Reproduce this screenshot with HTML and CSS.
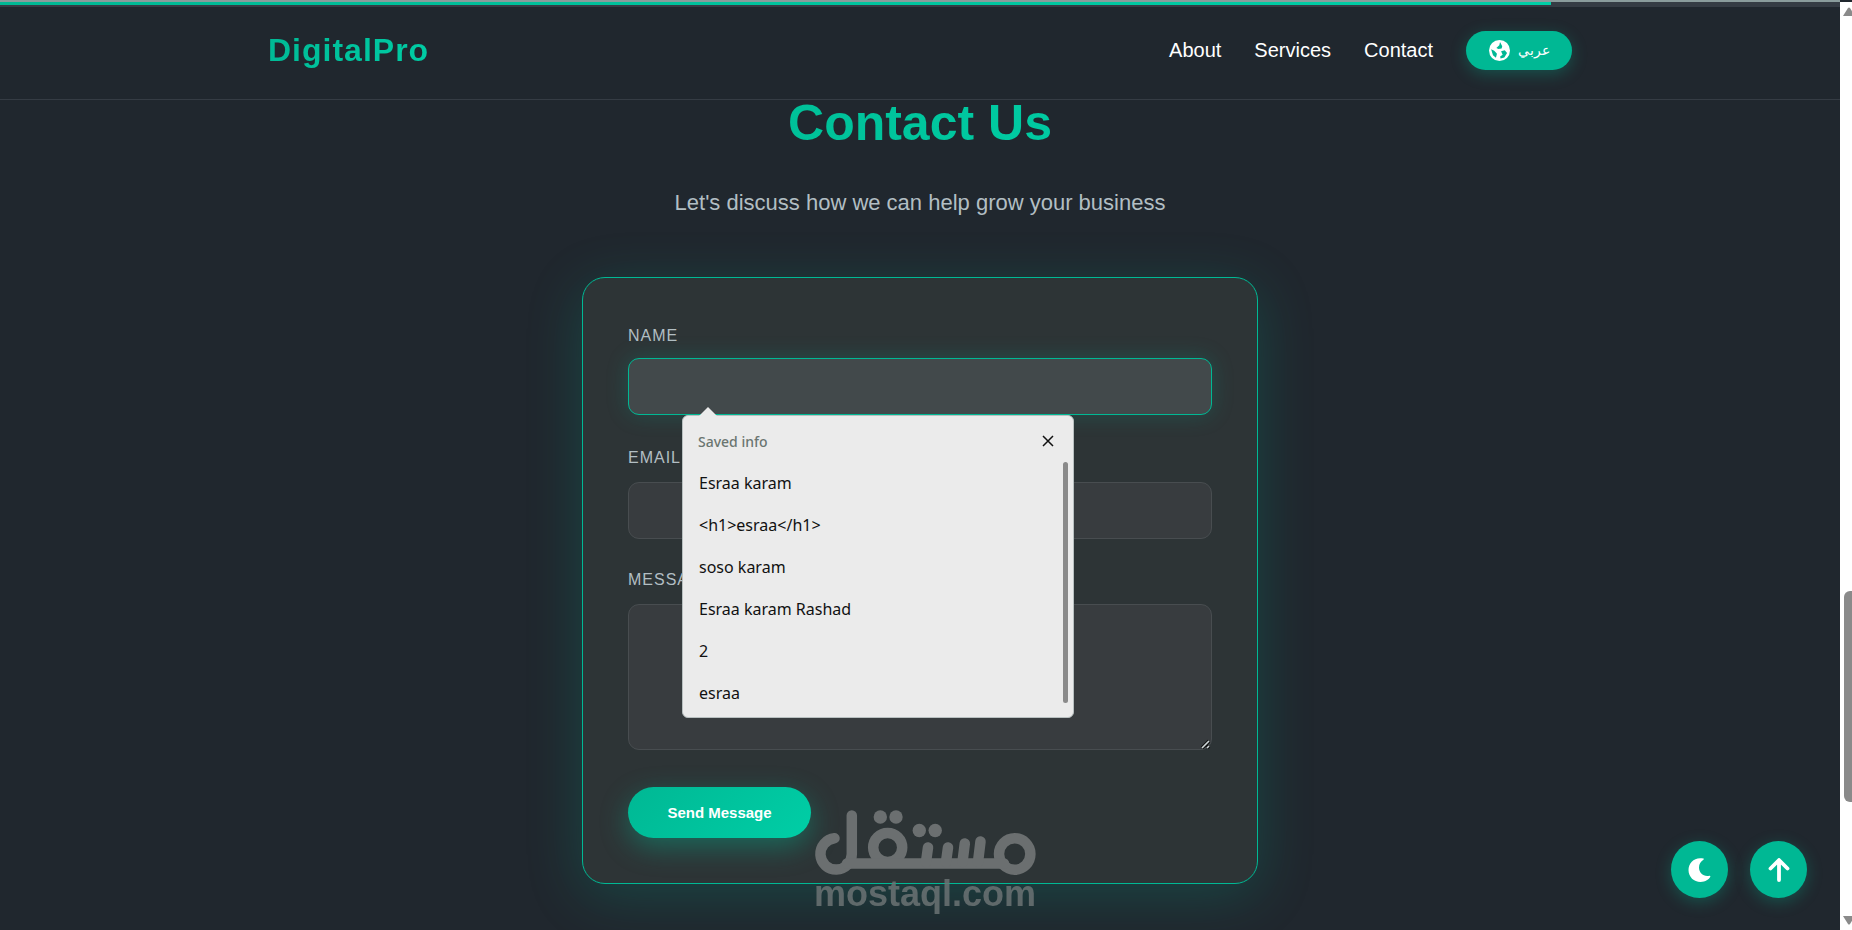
FILE: index.html
```html
<!DOCTYPE html>
<html lang="en">
<head>
<meta charset="utf-8">
<title>DigitalPro - Contact Us</title>
<link rel="stylesheet" href="styles.css">
</head>
<body>
<div class="page">
  <header class="header">
    <div class="progress"><div class="progress-fill"></div></div>
    <div class="header-inner">
      <a class="logo" href="#">DigitalPro</a>
      <nav class="nav">
        <a class="nav-link" href="#about">About</a>
        <a class="nav-link" href="#services">Services</a>
        <a class="nav-link" href="#contact">Contact</a>
        <button class="lang" type="button">
          <svg class="lang-icon" viewBox="0 0 20 20" aria-hidden="true">
            <circle cx="10" cy="10" r="10" fill="#fff"/>
            <path d="M10.500 1.800 L12.600 6 L12 8 L9 8.600 L7 7.600 L9.800 5 Z M2 8.800 L5 10.200 L7.600 13 L6.600 17 L3.800 14.500 Z M11.500 10.600 L15 9.800 L17.200 12.400 L14.600 16.600 L11 17.600 L10.600 15.600 L13 14 Z" fill="#00b894"/>
          </svg>
          <span lang="ar">عربي</span>
        </button>
      </nav>
    </div>
  </header>

  <main class="contact" id="contact">
    <h1 class="title">Contact Us</h1>
    <p class="subtitle">Let's discuss how we can help grow your business</p>
    <form class="card">
      <div class="field">
        <label class="label label-active" for="name">Name</label>
        <div class="control control-active">
          <input class="input input-active" id="name" type="text">
          <section class="saved" aria-label="Saved info">
            <div class="saved-head">
              <span>Saved info</span>
              <button class="saved-close" type="button" aria-label="Close">
                <svg viewBox="0 0 12 12" width="12" height="12"><path d="M1 1 L11 11 M11 1 L1 11" stroke="#111" stroke-width="1.5" fill="none"/></svg>
              </button>
            </div>
            <div class="saved-body">
              <ul class="saved-list">
                <li>Esraa karam</li>
                <li>&lt;h1&gt;esraa&lt;/h1&gt;</li>
                <li>soso karam</li>
                <li>Esraa karam Rashad</li>
                <li>2</li>
                <li>esraa</li>
              </ul>
              <div class="saved-thumb"></div>
            </div>
          </section>
        </div>
      </div>
      <div class="field">
        <label class="label" for="email">Email</label>
        <input class="input" id="email" type="email">
      </div>
      <div class="field">
        <label class="label" for="message">Message</label>
        <div class="control">
          <textarea class="input textarea" id="message"></textarea>
          <svg class="grip" viewBox="0 0 10 10" aria-hidden="true"><path d="M1 9 L8 2 M6 9 L8 7" stroke="#111" stroke-width="3.4"/><path d="M1 9 L8 2 M6 9 L8 7" stroke="#d0d8da" stroke-width="1.600"/></svg>
        </div>
      </div>
      <button class="send" type="submit">Send Message</button>
      <div class="watermark">
        <svg class="watermark-logo" viewBox="0 0 222 65" role="img" aria-label="مستقل">
          <g fill="none" stroke="#6b6f70" stroke-width="10.5" stroke-linecap="round">
            <path d="M20.500 28.300 A15.700 15.700 0 1 0 37.800 44 V5.500"/>
            <circle cx="73.700" cy="37.500" r="14.500"/>
            <circle cx="200.700" cy="44" r="15.700"/>
            <path d="M33 53.500 H190"/>
            <path d="M112 52 L114 37.500 M132 52 L134 37.500 M148.500 52 L150.800 33.500 M164 52 L166.500 31.500"/>
          </g>
          <g fill="#6b6f70">
            <circle cx="66.300" cy="7" r="6.700"/><circle cx="82" cy="7" r="6.700"/>
            <circle cx="105.300" cy="20.500" r="6.700"/><circle cx="121.200" cy="20.500" r="6.700"/>
          </g>
        </svg>
        <span class="watermark-text">mostaql.com</span>
      </div>
    </form>
  </main>

  <div class="floating">
    <button class="round" type="button" aria-label="Dark mode">
      <svg viewBox="0 0 24 24" width="24" height="24"><path d="M15.500 .6 C7 -1.500 .5 4.500 .5 12 C.5 19 6 24 12.500 24 C17.500 24 21 21.500 22.300 18.800 C22.600 18 22 17.600 21.300 17.800 C15.500 19 11 15 11 9.500 C11 6 12.700 3.500 15.400 1.800 C16 1.400 16 .8 15.500 .6 Z" fill="#fff"/></svg>
    </button>
    <button class="round" type="button" aria-label="Back to top">
      <svg viewBox="0 0 24 24" width="24" height="24"><path d="M12 2.500 V22 M3.500 10.500 L12 2 L20.500 10.500" fill="none" stroke="#fff" stroke-width="3.800" stroke-linecap="round" stroke-linejoin="round"/></svg>
    </button>
  </div>

  <div class="scrollbar" aria-hidden="true">
    <svg class="scroll-arrow" viewBox="0 0 12 10"><path d="M3 9 L8 1 Q9 0 10 1 L15 9 Z" fill="#8a8a8a"/></svg>
    <div class="scroll-thumb"></div>
    <svg class="scroll-arrow" viewBox="0 0 12 10"><path d="M3 1 L8 9 Q9 10 10 9 L15 1 Z" fill="#8a8a8a"/></svg>
  </div>
</div>
</body>
</html>
```
FILE: styles.css
```css
* { box-sizing: border-box; }

body {
  margin: 0;
  background: #20272e;
  color: #fff;
  font-family: "Liberation Sans", Arial, sans-serif;
  overflow: hidden;
}

button, input, textarea { font-family: inherit; }

.page {
  position: relative;
  height: 100vh;
  padding-right: 12px;
  overflow: hidden;
}

.header {
  height: 100px;
  border-bottom: 1px solid #353c44;
}

.progress {
  height: 7px;
  border-top: 2px solid #8a9c9c;
  background: #353c44;
}

.progress-fill {
  width: 84.3%;
  height: 3px;
  background: linear-gradient(90deg, #00b894, #00cea6);
}

.header-inner {
  display: flex;
  align-items: center;
  justify-content: space-between;
  max-width: 1304px;
  height: 86px;
  margin: 0 auto;
}

.logo {
  font-size: 32px;
  font-weight: 700;
  letter-spacing: 1px;
  text-decoration: none;
  color: transparent;
  background: linear-gradient(135deg, #00b894, #00cea6);
  background-clip: text;
}

.nav {
  display: flex;
  align-items: center;
  gap: 33px;
}

.nav-link {
  color: #fff;
  font-size: 20px;
  text-decoration: none;
}

.lang {
  display: flex;
  align-items: center;
  justify-content: center;
  gap: 8px;
  width: 106px;
  height: 39px;
  padding: 0;
  border: 0;
  border-radius: 20px;
  background: #00b894;
  color: #fff;
  font-size: 14px;
  box-shadow: 0 4px 16px rgba(0, 184, 148, .3);
}

.lang-icon {
  width: 21px;
  height: 21px;
}

.contact { text-align: center; }

.title {
  width: fit-content;
  margin: 0 auto;
  padding: 1px 2px 0;
  font-size: 50px;
  line-height: 44px;
  color: transparent;
  background: linear-gradient(90deg, #00c199, #00cba2);
  background-clip: text;
}

.subtitle {
  margin: 42px 0 58px;
  color: #b2bec3;
  font-size: 22px;
  line-height: 32px;
}

.card {
  position: relative;
  width: 676px;
  margin: 0 auto;
  padding: 45px;
  border: 1px solid #00b894;
  border-radius: 23px;
  background: #2d3436;
  text-align: left;
  box-shadow: 0 11px 56px rgba(0, 184, 148, .22);
}

.field { margin-bottom: 28px; }

.label {
  display: block;
  margin-bottom: 11px;
  color: #b2bec3;
  font-size: 16px;
  line-height: 26px;
  letter-spacing: 1px;
  text-transform: uppercase;
}

.label-active { margin-bottom: 9px; }

.control { position: relative; }

.control-active { margin-bottom: 30px; }

.input {
  display: block;
  width: 100%;
  height: 57px;
  padding: 16px;
  border: 1px solid #484d50;
  border-radius: 11px;
  outline: 0;
  background: #383c3f;
  color: #fff;
  font-size: 18px;
}

.input-active {
  border-color: #00b894;
  background: #42494b;
  box-shadow: 0 0 22px rgba(0, 184, 148, .22);
}

.textarea {
  height: 146px;
  resize: none;
}

.grip {
  position: absolute;
  right: 1px;
  bottom: 1px;
  width: 10px;
  height: 10px;
}

.send {
  display: block;
  width: 183px;
  height: 51px;
  margin-top: 37px;
  padding: 0;
  border: 0;
  border-radius: 26px;
  background: linear-gradient(135deg, #00b894, #00cea6);
  color: #fff;
  font-size: 15px;
  font-weight: 700;
  box-shadow: 0 9px 28px rgba(0, 184, 148, .4);
}

.saved {
  position: absolute;
  top: 57px;
  left: 54px;
  z-index: 1;
  width: 392px;
  border: 1px solid #b8c0c0;
  border-radius: 6px;
  background: #ebebeb;
  color: #111;
  font-family: "Noto Sans", "Open Sans", sans-serif;
}

.saved::before {
  content: "";
  position: absolute;
  top: -9px;
  left: 16px;
  width: 18px;
  height: 9px;
  background: #ebebeb;
  clip-path: polygon(50% 0, 100% 100%, 0 100%);
}

.saved-head {
  display: flex;
  align-items: center;
  justify-content: space-between;
  height: 46px;
  padding: 4px 19px 0 15px;
  color: #6a7570;
  font-size: 14px;
  font-weight: 500;
}

.saved-close {
  display: flex;
  padding: 0;
  border: 0;
  background: none;
}

.saved-body {
  display: flex;
  justify-content: space-between;
  padding: 0 5px 3px 16px;
}

.saved-list {
  margin: 0;
  padding: 0;
  list-style: none;
  font-size: 16px;
  line-height: 42px;
}

.saved-thumb {
  width: 5px;
  height: 241px;
  border-radius: 3px;
  background: #8a8a8a;
}

.watermark {
  position: absolute;
  left: 231px;
  bottom: -30px;
  display: flex;
  flex-direction: column;
  width: 222px;
  color: #6b7374;
}

.watermark-logo {
  width: 222px;
  height: 65px;
  overflow: visible;
}

.watermark-text {
  font-size: 36px;
  font-weight: 700;
  line-height: 38px;
  opacity: .85;
}

.floating {
  position: absolute;
  right: 45px;
  bottom: 32px;
  display: flex;
  gap: 22px;
}

.round {
  display: flex;
  align-items: center;
  justify-content: center;
  width: 57px;
  height: 57px;
  padding: 0;
  border: 0;
  border-radius: 50%;
  background: #00b894;
  box-shadow: 0 4px 16px rgba(0, 184, 148, .3);
}

.scrollbar {
  position: absolute;
  top: 2px;
  right: 0;
  bottom: 0;
  display: grid;
  grid-template-rows: 20px 1fr 20px;
  width: 12px;
  background: #fff;
}

.scroll-arrow {
  align-self: center;
  width: 12px;
  height: 10px;
}

.scroll-thumb {
  height: 211px;
  margin: 569px 0 0 4px;
  border-radius: 6px 0 0 6px;
  background: #8a8a8a;
}
```
